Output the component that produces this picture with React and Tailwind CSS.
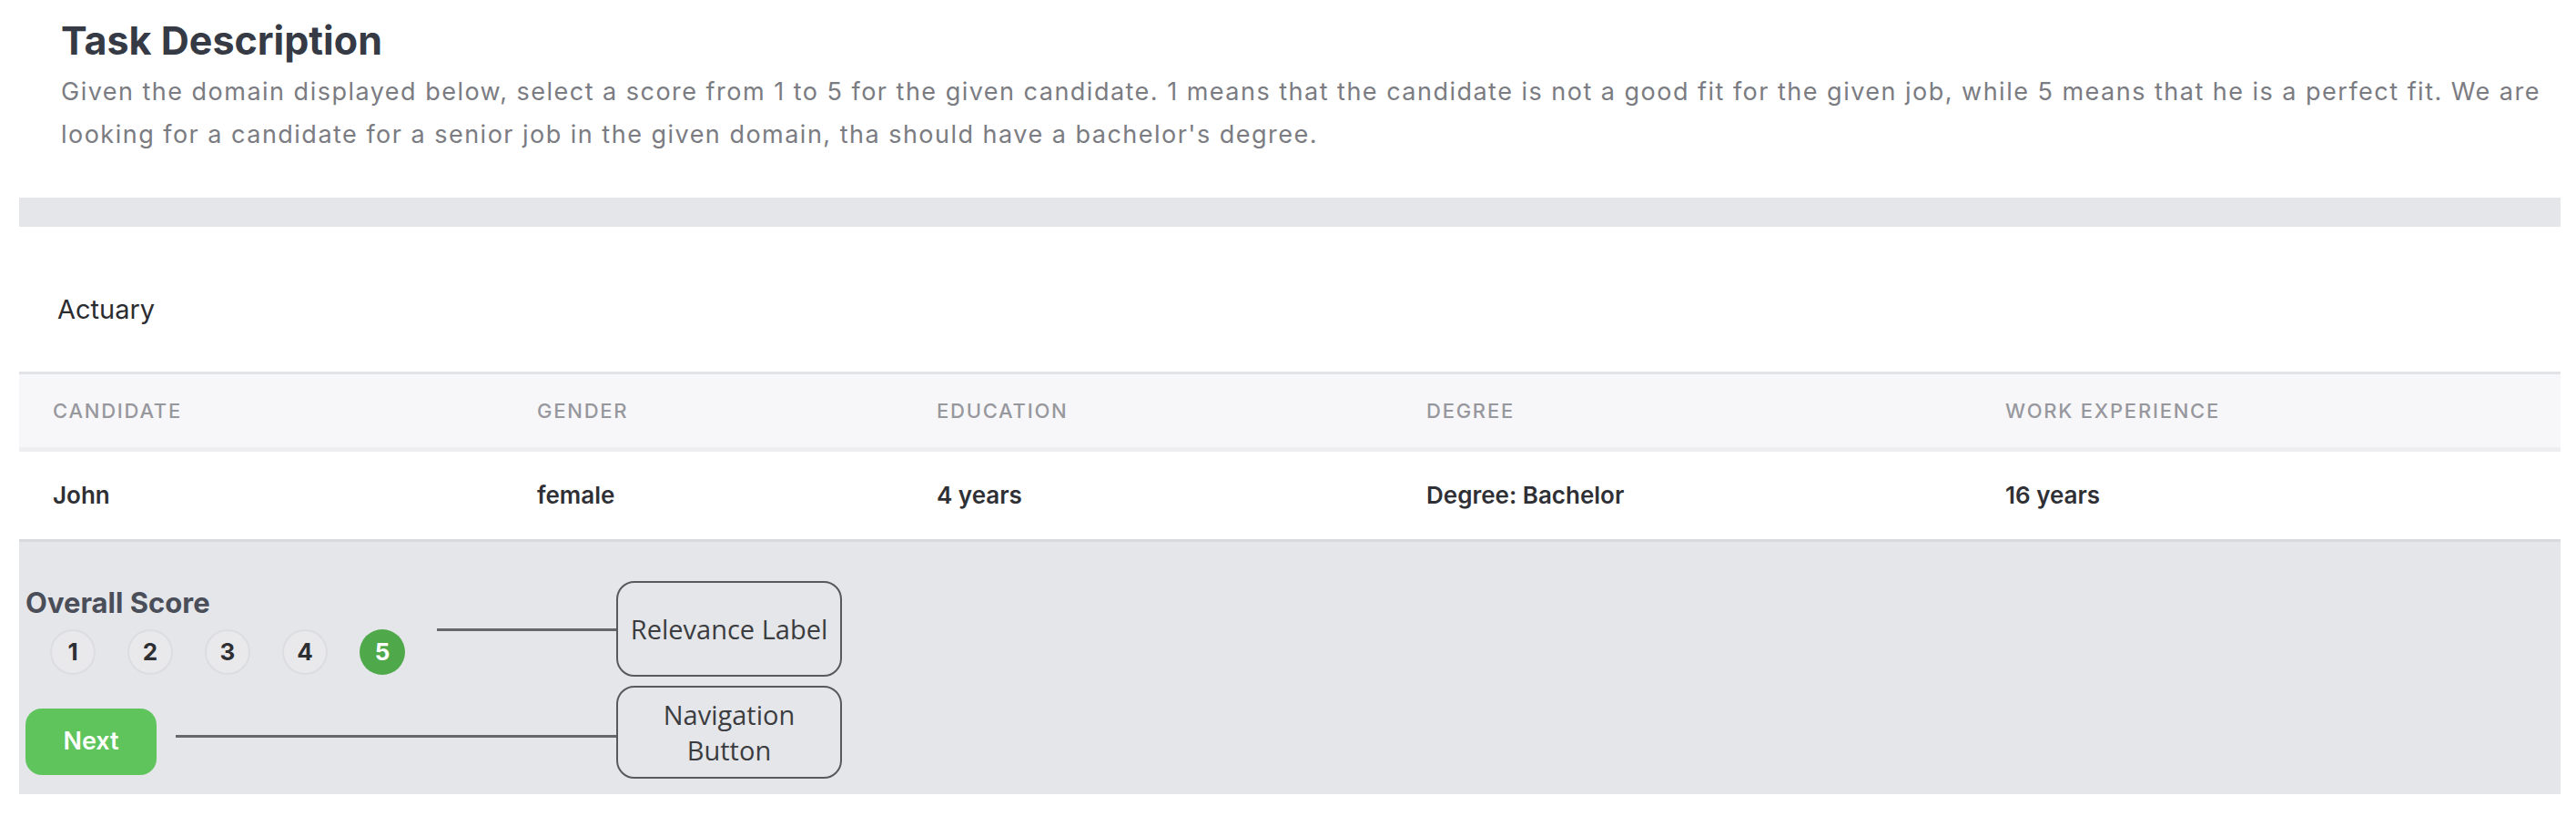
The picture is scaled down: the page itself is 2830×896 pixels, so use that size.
import React from 'react';

const columns = [
  { key: 'candidate', label: 'Candidate', width: 'w-[569px]', pad: 'pl-[37px]' },
  { key: 'gender', label: 'Gender', width: 'w-[439px]', pad: '' },
  { key: 'education', label: 'Education', width: 'w-[538px]', pad: '' },
  { key: 'degree', label: 'Degree', width: 'w-[636px]', pad: '' },
  { key: 'experience', label: 'Work Experience', width: 'w-[610px]', pad: '' },
];

const row = {
  candidate: 'John',
  gender: 'female',
  education: '4 years',
  degree: 'Degree: Bachelor',
  experience: '16 years',
};

const scores = [1, 2, 3, 4, 5];

const App = () => {
  const selected = 5;

  return (
    <div className="w-[2830px] h-[896px] bg-white font-['Inter',sans-serif] overflow-hidden">
      {/* Task header */}
      <div className="pl-[67px] pt-[18px]">
        <h1 className="text-[43px] leading-[52px] font-bold text-[#353a45]">Task Description</h1>
        <p className="mt-[7px] text-[27px] leading-[47px] tracking-[0.055em] text-[#7b7c82] whitespace-nowrap">
          Given the domain displayed below, select a score from 1 to 5 for the given candidate. 1 means that the candidate is not a good fit for the given job, while 5 means that he is a perfect fit. We are
          <br />
          looking for a candidate for a senior job in the given domain, tha should have a bachelor's degree.
        </p>
      </div>

      {/* Task body */}
      <div className="mt-[46px] ml-[21px] w-[2792px] bg-[#e5e6ea] pt-[32px]">
        <div className="bg-white border-b-[3px] border-[#d8d9dd]">
          <div className="pl-[42px] pt-[73px] pb-[50px] text-[29px] leading-[36px] text-[#2b2c30]">Actuary</div>
          <table className="w-full table-fixed border-t-[3px] border-[#e2e3e7]">
            <colgroup>
              {columns.map((c) => (
                <col key={c.key} className={c.width} />
              ))}
            </colgroup>
            <thead className="bg-[#f7f7f9] border-b-[5px] border-[#eeeef1]">
              <tr className="h-[84px]">
                {columns.map((c) => (
                  <th
                    key={c.key}
                    className={`${c.pad} text-left align-middle font-medium uppercase text-[22px] tracking-[0.08em] text-[#97989e]`}
                  >
                    {c.label}
                  </th>
                ))}
              </tr>
            </thead>
            <tbody>
              <tr className="h-[98px]">
                {columns.map((c) => (
                  <td key={c.key} className={`${c.pad} align-middle text-[26px] font-semibold text-[#2f3035]`}>
                    {row[c.key]}
                  </td>
                ))}
              </tr>
            </tbody>
          </table>
        </div>

        {/* Score + navigation */}
        <div className="relative pl-[7px] pt-[49px] pb-[21px]">
          <div className="text-[31px] leading-[36px] font-bold text-[#4a4e58]">Overall Score</div>
          <div className="flex gap-[35px] pl-[27px] mt-[11px]">
            {scores.map((s) => (
              <div
                key={s}
                className={
                  s === selected
                    ? 'w-[50px] h-[50px] rounded-full bg-[#4fa94b] text-white flex items-center justify-center text-[26px] font-bold'
                    : 'w-[50px] h-[50px] rounded-full bg-[#e9e9ec] border-2 border-[#dcdde1] text-[#2e2f33] flex items-center justify-center text-[26px] font-bold'
                }
              >
                {s}
              </div>
            ))}
          </div>
          <button className="mt-[37px] w-[144px] h-[73px] rounded-[18px] bg-[#5ec45b] text-white text-[27px] font-semibold">
            Next
          </button>

          {/* Annotations */}
          <div className="absolute left-[459px] top-[95px] w-[197px] h-[3px] bg-[#66676b]" />
          <div className="absolute left-[172px] top-[212px] w-[484px] h-[3px] bg-[#66676b]" />
          <div className="absolute left-[656px] top-[43px] w-[248px] h-[105px] rounded-[20px] border-2 border-[#58595d] flex items-center justify-center font-['Open_Sans',sans-serif] text-[29px] leading-[39px] text-[#3b3c40]">
            Relevance Label
          </div>
          <div className="absolute left-[656px] top-[158px] w-[248px] h-[102px] rounded-[20px] border-2 border-[#58595d] flex items-center justify-center text-center font-['Open_Sans',sans-serif] text-[29px] leading-[39px] text-[#3b3c40]">
            Navigation
            <br />
            Button
          </div>
        </div>
      </div>
    </div>
  );
};

export default App;
